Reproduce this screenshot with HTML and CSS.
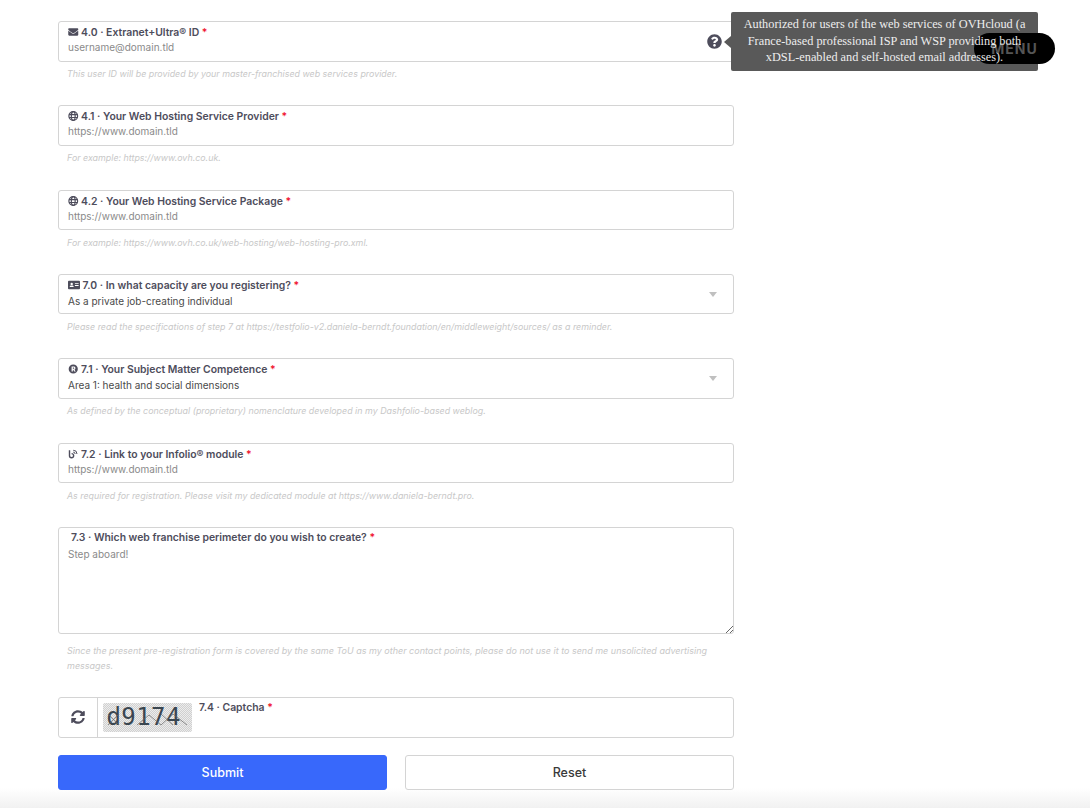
FILE: index.html
```html
<!DOCTYPE html>
<html lang="en">
<head>
<meta charset="utf-8">
<title>Pre-registration</title>
<link rel="stylesheet" href="styles.css">
</head>
<body>
<button class="menu" type="button">MENU</button>
<form class="form">
  <div class="field">
    <div class="box">
      <label class="label"><svg class="ic" viewBox="0 0 512 512"><path d="M502 191c4-3 10 0 10 5v204c0 26-22 48-48 48H48c-26 0-48-22-48-48V196c0-5 6-8 10-5 22 17 52 39 154 113 21 15 57 48 92 48 35 0 71-33 92-48 102-74 132-96 154-113zM256 320c23 0 57-29 73-41 133-96 143-105 174-129 6-5 9-12 9-19v-19c0-26-22-48-48-48H48C22 64 0 86 0 112v19c0 7 3 14 9 19 31 24 41 33 174 129 16 12 50 41 73 41z"/></svg> 4.0 · Extranet+Ultra® ID <span class="req">*</span></label>
      <div class="ph">username@domain.tld</div>
      <svg class="help" viewBox="0 0 512 512"><path d="M504 256c0 137-111 248-248 248S8 393 8 256 119 8 256 8s248 111 248 248zM263 90c-55 0-89 23-116 64-4 5-3 12 2 16l35 26c5 4 13 3 17-2 18-23 30-36 57-36 20 0 45 13 45 33 0 15-12 22-32 33-23 13-54 30-54 71v4c0 7 5 12 12 12h56c7 0 12-5 12-12v-1c0-29 84-30 84-108 0-59-61-100-118-100zm-7 250c-26 0-46 21-46 46s20 46 46 46 46-21 46-46-20-46-46-46z"/></svg>
    </div>
    <p class="hint">This user ID will be provided by your master-franchised web services provider.</p>
  </div>
  <div class="field">
    <div class="box">
      <label class="label"><svg class="ic" viewBox="0 0 24 24"><circle cx="12" cy="12" r="10.500" fill="none" stroke="currentColor" stroke-width="2.800"/><ellipse cx="12" cy="12" rx="4.600" ry="10.500" fill="none" stroke="currentColor" stroke-width="2.800"/><path d="M2 8.500h20M2 15.500h20" stroke="currentColor" stroke-width="2.800"/></svg> 4.1 · Your Web Hosting Service Provider <span class="req">*</span></label>
      <div class="ph">https://www.domain.tld</div>
    </div>
    <p class="hint">For example: https://www.ovh.co.uk.</p>
  </div>
  <div class="field">
    <div class="box">
      <label class="label"><svg class="ic" viewBox="0 0 24 24"><circle cx="12" cy="12" r="10.500" fill="none" stroke="currentColor" stroke-width="2.800"/><ellipse cx="12" cy="12" rx="4.600" ry="10.500" fill="none" stroke="currentColor" stroke-width="2.800"/><path d="M2 8.500h20M2 15.500h20" stroke="currentColor" stroke-width="2.800"/></svg> 4.2 · Your Web Hosting Service Package <span class="req">*</span></label>
      <div class="ph">https://www.domain.tld</div>
    </div>
    <p class="hint">For example: https://www.ovh.co.uk/web-hosting/web-hosting-pro.xml.</p>
  </div>
  <div class="field">
    <div class="box">
      <label class="label"><svg class="ic ic-wide" viewBox="0 0 26 20"><path fill-rule="evenodd" d="M2 1h22a2 2 0 0 1 2 2v14a2 2 0 0 1-2 2H2a2 2 0 0 1-2-2V3a2 2 0 0 1 2-2zm6 4a2.600 2.600 0 1 0 0 5.200a2.600 2.600 0 0 0 0-5.200zM3.500 14.500h9c0-2.500-2-3.500-4.500-3.500s-4.500 1-4.500 3.500zM15 6v2h8V6zm0 4v2h8v-2z"/></svg> 7.0 · In what capacity are you registering? <span class="req">*</span></label>
      <div class="val">As a private job-creating individual</div>
      <span class="caret"></span>
    </div>
    <p class="hint">Please read the specifications of step 7 at https://testfolio-v2.daniela-berndt.foundation/en/middleweight/sources/ as a reminder.</p>
  </div>
  <div class="field">
    <div class="box">
      <label class="label"><svg class="ic" viewBox="0 0 24 24"><path fill-rule="evenodd" d="M12 1a11 11 0 1 1 0 22 11 11 0 0 1 0-22zM8 6v12h3v-4h1l2.500 4H18l-3-4.500c1.500-.7 2.300-2 2.300-3.700C17.300 7.300 15.500 6 13 6zm3 2.500h1.800c1 0 1.600.5 1.600 1.400s-.6 1.500-1.600 1.500H11z"/></svg> 7.1 · Your Subject Matter Competence <span class="req">*</span></label>
      <div class="val">Area 1: health and social dimensions</div>
      <span class="caret"></span>
    </div>
    <p class="hint">As defined by the conceptual (proprietary) nomenclature developed in my Dashfolio-based weblog.</p>
  </div>
  <div class="field">
    <div class="box">
      <label class="label"><svg class="ic" viewBox="0 0 24 24"><path d="M3 3v13a5 5 0 1 0 5-5" fill="none" stroke="currentColor" stroke-width="3.400"/><path d="M12 3a9 9 0 0 1 9 9M12 7.500a4.500 4.500 0 0 1 4.500 4.500" fill="none" stroke="currentColor" stroke-width="2.400"/></svg> 7.2 · Link to your Infolio® module <span class="req">*</span></label>
      <div class="ph">https://www.domain.tld</div>
    </div>
    <p class="hint">As required for registration. Please visit my dedicated module at https://www.daniela-berndt.pro.</p>
  </div>
  <div class="field field-area">
    <div class="box box-area">
      <label class="label label-area">7.3 · Which web franchise perimeter do you wish to create? <span class="req">*</span></label>
      <div class="ph ph-area">Step aboard!</div>
      <svg class="grip" viewBox="0 0 8 8"><path d="M1 8 8 1M5 8l3-3" stroke="#666" stroke-width="1" fill="none"/></svg>
    </div>
    <p class="hint hint-area">Since the present pre-registration form is covered by the same ToU as my other contact points, please do not use it to send me unsolicited advertising messages.</p>
  </div>
  <div class="captcha">
    <div class="refresh"><svg class="refresh-ic" viewBox="0 0 512 512"><path d="M370.700 133.300C339.500 104 298.900 88 255.800 88c-77.500.1-144.300 53.200-162.800 126.900-1.300 5.400-6.100 9.100-11.700 9.100H24.100c-7.500 0-13.200-6.800-11.800-14.200C33.900 94.900 134.800 8 256 8c66.400 0 126.800 26.100 171.300 68.700L463 41c15.100-15.100 41-4.400 41 17v134c0 13.300-10.700 24-24 24H346c-21.400 0-32.100-25.900-17-41zM32 296h134c21.400 0 32.100 25.900 17 41l-41.800 41.800c31.300 29.300 71.900 45.300 115 45.200 77.400-.1 144.300-53.100 162.800-126.800 1.300-5.400 6.100-9.100 11.700-9.100h57.300c7.500 0 13.200 6.800 11.800 14.200C478.100 417.100 377.200 504 256 504c-66.400 0-126.800-26.100-171.300-68.700L49 471c-15.100 15.100-41 4.400-41-17V320c0-13.300 10.700-24 24-24z"/></svg></div>
    <div class="captcha-img"><span class="captcha-txt">d9174</span><svg class="captcha-lines" viewBox="0 0 89 29"><path d="M5 11 16 22M5 22 16 11M34 22 46 12 58 22 70 11 84 22M58 11 70 22" fill="none" stroke="#666" stroke-width=".7"/></svg></div>
    <label class="label label-cap">7.4 · Captcha <span class="req">*</span></label>
  </div>
  <div class="actions">
    <button class="btn btn-primary" type="button">Submit</button>
    <button class="btn btn-light" type="button">Reset</button>
  </div>
</form>
<div class="tooltip"><span class="tooltip-text">Authorized for users of the web services of OVHcloud (a France-based professional ISP and WSP providing both xDSL-enabled and self-hosted email addresses).</span></div>
</body>
</html>
```
FILE: styles.css
```css
* { box-sizing: border-box; }
html { background: #fff; }
html, body { margin: 0; height: 808px; overflow: hidden; }
body { position: relative; font-family: Inter, "Liberation Sans", sans-serif; color: #4e4d5c; background: linear-gradient(#fff, #f1f1f1) left bottom / 100% 20px no-repeat; }
.form { width: 676px; margin-left: 58px; padding-top: 21px; display: flex; flex-direction: column; }
.field { height: 84.330px; }
.field-area { height: 170px; }
.box { position: relative; height: 40.500px; border: 1px solid #d4d4d4; border-radius: 3px; padding: 3px 9px 0; background: #fff; }
.box-area { height: 107px; padding-top: 2px; }
.label { display: block; font-size: 10.400px; line-height: 15px; font-weight: 600; color: #4e4d5c; white-space: nowrap; }
.label-area { padding-left: 3px; }
.ic { width: 10.500px; height: 10px; fill: currentColor; vertical-align: -1px; }
.ic-wide { width: 12px; }
.req { color: #f0142f; }
.ph, .val { font-size: 10px; line-height: 15px; white-space: nowrap; }
.ph { color: #8a8a8a; }
.ph-area { margin-top: 2px; }
.val { color: #4a4a4a; margin-top: 1px; }
.hint { margin: 5.500px 0 0 9px; font-size: 8.900px; line-height: 14.500px; font-style: italic; color: #c8c8c8; }
.hint-area { margin-top: 10.500px; font-size: 9px; }
.help { position: absolute; right: 11px; top: 12px; width: 15px; height: 15px; fill: #4e4d5c; }
.caret { position: absolute; right: 16px; top: 17px; border: 4.500px solid transparent; border-top: 5px solid #c0c0c0; border-bottom: 0; }
.grip { position: absolute; right: 0; bottom: 0; width: 8px; height: 8px; }
.captcha { display: flex; height: 41px; border: 1px solid #d4d4d4; border-radius: 3px; background: #fff; }
.refresh { width: 39px; border-right: 1px solid #d4d4d4; display: flex; align-items: center; justify-content: center; }
.refresh-ic { width: 14px; height: 14px; fill: #4e4d5c; }
.captcha-img { position: relative; width: 89px; height: 29px; margin: 5px 0 0 5px; padding-left: 3.500px; border-radius: 2px; background: repeating-conic-gradient(#d0d0d0 0 25%, #ececec 0 50%) 0 0 / 2px 2px; overflow: hidden; }
.captcha-txt { font-family: "DejaVu Sans Mono", monospace; font-size: 24px; line-height: 29px; letter-spacing: .4px; color: #3a4650; }
.captcha-lines { position: absolute; left: 0; top: 0; width: 100%; height: 100%; }
.label-cap { margin: 2px 0 0 7px; }
.actions { display: grid; grid-template-columns: 1fr 1fr; gap: 18px; margin-top: 17px; }
.btn { height: 35px; border-radius: 3px; font-family: Inter, "Liberation Sans", sans-serif; font-size: 12.500px; font-weight: 500; }
.btn-primary { background: #3868fb; border: 1px solid #3868fb; color: #fff; }
.btn-light { background: #fff; border: 1px solid #d4d4d4; color: #3a3a3a; }
.tooltip { position: absolute; left: 731px; top: 12px; width: 307px; height: 59px; padding: 4px 6px; border-radius: 2px; background: #595959; color: #fff; font-family: "Liberation Serif", serif; font-size: 12.300px; line-height: 16.500px; text-align: center; }
.tooltip::before { content: ""; position: absolute; left: -7px; top: 24px; border: 6px solid transparent; border-left: 0; border-right: 7px solid #595959; }
.tooltip-text { position: relative; z-index: 2; opacity: .9; }
.menu { position: absolute; z-index: 1; left: 974px; top: 33px; width: 81px; height: 31px; border: 0; border-radius: 16px; background: #000; color: #555; font-family: Inter, "Liberation Sans", sans-serif; font-size: 14px; font-weight: 700; letter-spacing: 1px; }
```
